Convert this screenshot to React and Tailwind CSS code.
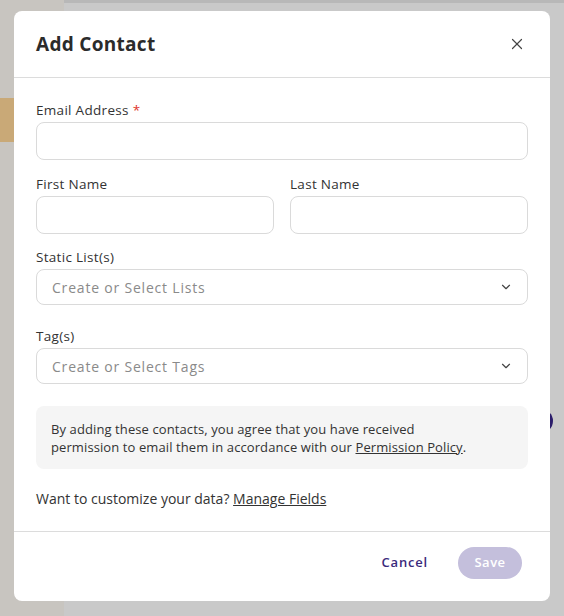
import { X, ChevronDown } from 'lucide-react';

function Field({ label, required, children }) {
  return (
    <div className="flex flex-col gap-[3px]">
      <label className="text-[13.5px] leading-[18px] tracking-[0.3px] text-[#333]">
        {label}
        {required && <span className="text-[#e0342c] ml-1">*</span>}
      </label>
      {children}
    </div>
  );
}

function TextInput() {
  return (
    <input
      type="text"
      className="w-full h-[38px] border border-[#dadada] rounded-lg px-3 outline-none bg-white"
    />
  );
}

function SelectBox({ placeholder }) {
  return (
    <div className="w-full h-[36px] border border-[#dadada] rounded-lg pl-[15px] pr-[14px] flex items-center justify-between">
      <span className="text-[14px] tracking-[0.8px] text-[#8a8a8a]">{placeholder}</span>
      <ChevronDown size={14} strokeWidth={2} className="text-[#444]" />
    </div>
  );
}

export default function App() {
  return (
    <div
      className="relative w-[564px] h-[616px] overflow-hidden bg-[#c9c9c9] flex"
      style={{ fontFamily: '"Open Sans", sans-serif' }}
    >
      {/* backdrop bits */}
      <div className="absolute left-0 top-0 w-[64px] h-full bg-[#c8c5c0]" />
      <div className="absolute left-[64px] top-0 right-0 h-[3px] bg-[#b8b8b8]" />
      <div className="absolute left-0 top-[98px] w-[14px] h-[44px] bg-[#c9a977]" />
      <div className="absolute left-[529px] top-[409px] w-[24px] h-[24px] rounded-full bg-[#2b1d6b]" />

      <div className="relative mt-[11px] ml-[14px] w-[536px] h-[590px] bg-white rounded-lg flex flex-col">
        <div className="h-[67px] shrink-0 flex items-center justify-between pl-[22px] pr-[24px] border-b border-[#dcdcdc]">
          <h2 className="text-[19px] font-bold tracking-[0.3px] text-[#2b2b2b]">Add Contact</h2>
          <X size={18} strokeWidth={1.6} className="text-[#444]" />
        </div>

        <div className="flex-1 px-[22px] pt-[23px] flex flex-col">
          <Field label="Email Address" required>
            <TextInput />
          </Field>

          <div className="grid grid-cols-2 gap-4 mt-[15px]">
            <Field label="First Name">
              <TextInput />
            </Field>
            <Field label="Last Name">
              <TextInput />
            </Field>
          </div>

          <div className="mt-[14px]">
            <Field label="Static List(s)">
              <SelectBox placeholder="Create or Select Lists" />
            </Field>
          </div>

          <div className="mt-[22px]">
            <Field label="Tag(s)">
              <SelectBox placeholder="Create or Select Tags" />
            </Field>
          </div>

          <div className="mt-[22px] bg-[#f5f5f5] rounded-lg px-[15px] pt-[14px] pb-[13px] text-[13px] leading-[18px] tracking-[0.1px] text-[#333]">
            By adding these contacts, you agree that you have received
            <br />
            permission to email them in accordance with our{' '}
            <a className="underline cursor-pointer">Permission Policy</a>.
          </div>

          <p className="mt-[21px] text-[14px] leading-[18px] text-[#333]">
            Want to customize your data?{' '}
            <a className="underline cursor-pointer">Manage Fields</a>
          </p>
        </div>

        <div className="h-[70px] shrink-0 border-t border-[#dcdcdc] flex items-start justify-end gap-[30px] pt-[15px] pr-[28px]">
          <button className="h-[32px] text-[13px] font-semibold tracking-[0.8px] text-[#3a2a7c]">Cancel</button>
          <button className="w-[64px] h-[32px] rounded-full bg-[#c4bfdc] text-white text-[13px] font-semibold tracking-[0.5px]">
            Save
          </button>
        </div>
      </div>
    </div>
  );
}
